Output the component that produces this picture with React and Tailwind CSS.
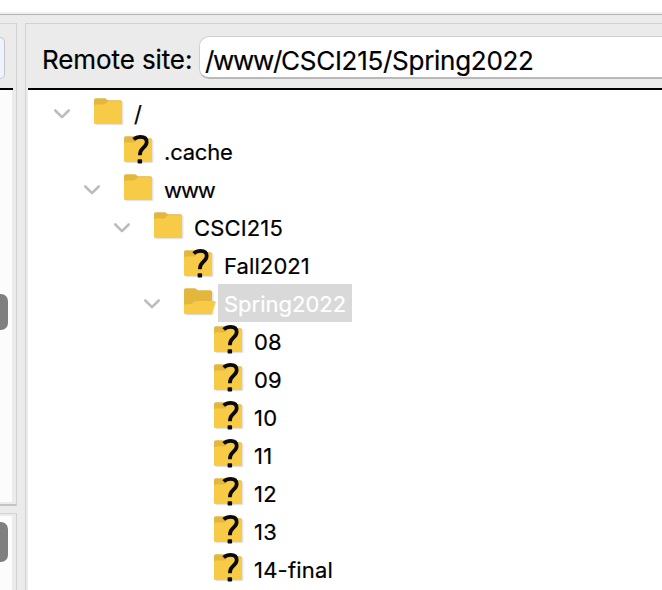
const FOLDER_BACK = "M0 2Q0 .3 1.700 .3H10.500Q11.800 .3 12.600 1.200L13.700 2.300H26.300Q28 2.300 28 4V24Q28 26 26 26H2Q0 26 0 24Z";

function Folder({ kind }) {
  return (
    <svg className="h-[32px] w-[34px] shrink-0 overflow-visible" viewBox="0 0 34 32">
      <path d={FOLDER_BACK} fill="#bbb" opacity=".4" transform="translate(1.5 1.2)" />
      <path d={FOLDER_BACK} fill="#e3b63e" />
      {kind === "open" ? (
        <>
          <path d="M2 27H27L32.500 14H8Z" fill="#bbb" opacity=".25" />
          <path d="M0 24.500V18Q0 16.200 2 16.200H6Q7.500 16.200 8.500 15.200L10 13.800Q11 13 12.500 13H30.500Q31.800 13 31.500 14.200L28.400 24.500Q28 26 26 26H1.500Q0 26 0 24.500Z" fill="#f7cb46" />
        </>
      ) : (
        <path d="M0 8Q0 6.500 1.700 6.500H9.500Q10.800 6.500 11.800 5.500L12.800 4.300Q13.700 3.300 15 3.300H26.500Q28 3.300 28 5V24Q28 26 26 26H2Q0 26 0 24Z" fill="#f7cb46" />
      )}
      {kind === "unknown" && (
        <g>
          <path d="M9.700 3.500C11.500 1.800 14 .9 16.600 .9C20.500 .9 22.700 2.900 22.700 6.100C22.700 9 21 10.600 18.900 12.300C16.700 14.100 15.900 15.500 15.900 19.300" fill="none" stroke="#0b0a06" strokeWidth="3.700" />
          <rect x="13.600" y="23.200" width="4.500" height="4.400" rx=".8" fill="#0b0a06" />
        </g>
      )}
    </svg>
  );
}

function Chevron() {
  return (
    <svg className="h-4 w-[18px]" viewBox="0 0 18 16" fill="none" stroke="#bdbdbd" strokeWidth="2.600" strokeLinecap="round" strokeLinejoin="round">
      <path d="M2.300 5.500L9 12.200L15.700 5.500" />
    </svg>
  );
}

const rows = [
  { label: "/", indent: "pl-[25px]", kind: "closed", arrow: true, track: "" },
  { label: ".cache", indent: "pl-[55px]", kind: "unknown", track: "tracking-[-0.2px]" },
  { label: "www", indent: "pl-[55px]", kind: "closed", arrow: true, track: "tracking-[-1.1px]" },
  { label: "CSCI215", indent: "pl-[85px]", kind: "closed", arrow: true, track: "tracking-[0.15px]" },
  { label: "Fall2021", indent: "pl-[115px]", kind: "unknown", track: "tracking-[0.1px]" },
  { label: "Spring2022", indent: "pl-[115px]", kind: "open", arrow: true, selected: true, track: "" },
  ...["08", "09", "10", "11", "12", "13", "14-final"].map((label) => ({
    label, indent: "pl-[145px]", kind: "unknown", track: "tracking-[0.2px]",
  })),
];

function Row({ row }) {
  return (
    <div className={`flex h-[38px] shrink-0 items-start ${row.indent}`}>
      <div className="w-[41px] pt-[11px]">{row.arrow && <Chevron />}</div>
      <div className="w-[34px] pt-1"><Folder kind={row.kind} /></div>
      <div className={`h-[38px] whitespace-nowrap px-1.5 text-[22px] leading-[41px] [-webkit-text-stroke:0.2px] ${row.track} ${row.selected ? "bg-[#d9d9d9] text-white" : "text-black"}`}>
        {row.label}
      </div>
    </div>
  );
}

function LocalPane() {
  return (
    <div className="flex w-[17px] shrink-0 flex-col pt-2">
      <div className="h-[483px] shrink-0 border-b-2 border-r border-t border-b-[#c3c3c3] border-r-[#d2d2d2] border-t-[#d5d5d5]">
        <div className="mr-[3px] flex h-[66px] items-start border-b-2 border-black pt-[13px]">
          <div className="h-[42px] w-[5px] rounded-r-lg border border-l-0 border-[#c5c5c5] bg-[#edf4ff]" />
        </div>
        <div className="mr-1 flex h-[412px] items-start bg-[#fcfcfc] pt-[204px]">
          <div className="h-9 w-2 rounded-r-[7px] bg-[#7f7f7f]" />
        </div>
      </div>
      <div className="mt-[7px] flex-1 border-r border-t border-[#d2d2d2] pt-0.5">
        <div className="mr-1 flex h-full items-start bg-[#fcfcfc] pt-[6px]">
          <div className="h-10 w-2 rounded-r-[7px] bg-[#7f7f7f]" />
        </div>
      </div>
    </div>
  );
}

export default function App() {
  return (
    <div className="flex h-[590px] w-[662px] flex-col overflow-hidden bg-[#ebebeb] font-['Inter',sans-serif] text-black">
      <div className="h-3 shrink-0 bg-white" />
      <div className="h-[3px] shrink-0 border-b border-[#b4b4b4] bg-[#f0f0f0]" />
      <div className="flex min-h-0 flex-1">
        <LocalPane />
        <div className="ml-2 mt-2 flex min-w-0 flex-1 flex-col border-l border-t border-[#d3d3d3] pl-0.5">
          <div className="flex h-[66px] shrink-0 items-start border-b-2 border-black pl-[14px] pt-3">
            <div className="w-[157px] shrink-0 whitespace-nowrap text-[26px] leading-[47px] tracking-[-0.1px] [-webkit-text-stroke:0.2px]">Remote site:</div>
            <div className="h-[43px] flex-1 whitespace-nowrap rounded-l-[10px] border border-b-2 border-r-0 border-[#d0d0d0] border-b-[#b9b9b9] bg-white pl-[5px] text-[26px] leading-[48px] tracking-[-0.28px] [-webkit-text-stroke:0.2px]">
              <span className="tracking-[-1.3px]">/www/</span>CSCI215/Spring2022
            </div>
          </div>
          <div className="min-h-0 flex-1 overflow-hidden bg-white pt-1">
            {rows.map((row) => <Row key={row.label} row={row} />)}
          </div>
        </div>
      </div>
    </div>
  );
}
